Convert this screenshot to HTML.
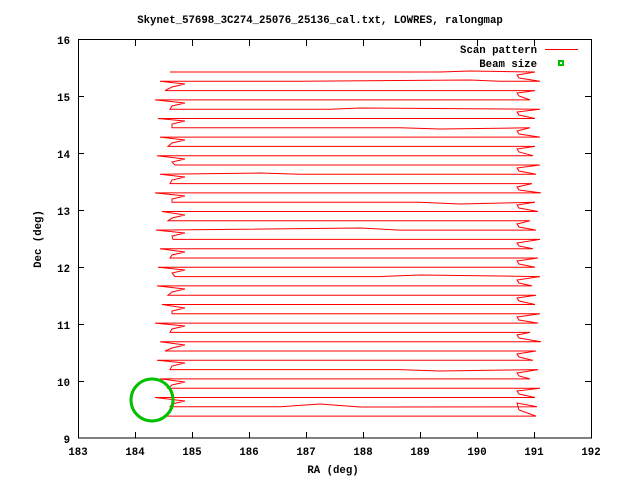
<!DOCTYPE html>
<html><head><style>
html,body{margin:0;padding:0;background:#fff;width:640px;height:480px;overflow:hidden}
svg text{font-family:"Liberation Mono","DejaVu Sans Mono",monospace;font-weight:bold;font-size:10.7px;fill:#000}
</style></head><body>
<svg width="640" height="480" viewBox="0 0 640 480" xmlns="http://www.w3.org/2000/svg">
<rect width="640" height="480" fill="#fff"/>
<text x="320" y="23" text-anchor="middle">Skynet_57698_3C274_25076_25136_cal.txt, LOWRES, ralongmap</text>
<g stroke="#000" stroke-width="1" fill="none">
<rect x="78.5" y="39.5" width="513" height="398.5"/>
<path d="M135.5,438V432M192.5,438V432M249.5,438V432M306.5,438V432M363.5,438V432M420.5,438V432M477.5,438V432M534.5,438V432
M135.5,40V46M192.5,40V46M249.5,40V46M306.5,40V46M363.5,40V46M420.5,40V46M477.5,40V46M534.5,40V46
M78,96.5H84M78,153.5H84M78,210.5H84M78,267.5H84M78,324.5H84M78,381.5H84
M591,96.5H585M591,153.5H585M591,210.5H585M591,267.5H585M591,324.5H585M591,381.5H585"/>
</g>
<g text-anchor="end">
<text x="70" y="44">16</text><text x="70" y="101">15</text><text x="70" y="158">14</text><text x="70" y="215">13</text>
<text x="70" y="272">12</text><text x="70" y="329">11</text><text x="70" y="386">10</text><text x="70" y="443">9</text>
</g>
<g text-anchor="middle">
<text x="78" y="455">183</text><text x="135" y="455">184</text><text x="192" y="455">185</text><text x="249" y="455">186</text>
<text x="306" y="455">187</text><text x="363" y="455">188</text><text x="420" y="455">189</text><text x="477" y="455">190</text>
<text x="534" y="455">191</text><text x="591" y="455">192</text>
<text x="333" y="473">RA (deg)</text>
</g>
<text transform="translate(41,239) rotate(-90)" text-anchor="middle">Dec (deg)</text>
<text x="537" y="53" text-anchor="end">Scan pattern</text>
<text x="537" y="67" text-anchor="end">Beam size</text>
<line x1="545" y1="49.5" x2="578" y2="49.5" stroke="#f00" stroke-width="1"/>
<rect x="558" y="60" width="6" height="6" fill="#00c000"/>
<rect x="560" y="62" width="2" height="2" fill="#fff"/>
<polyline fill="none" stroke="#f00" stroke-width="1" points="
170,72 440,72 470,71 535,72 517,75 519,78
540,81.3 500,81.3 470,80 300,81.3 160,81.3 185,84 172,87
165,90.6 535,90.6 517,93 519,96
530,99.9 155,99.9 185,103 172,106
170,109.2 330,109.2 360,108 540,109.2 517,112 519,115
535,118.5 158,118.5 185,121 172,124
172,127.8 400,127.8 440,129 530,127.8 517,131 519,134
540,137.1 160,137.1 185,140 172,143
168,146.4 535,146.4 517,149 519,152
533,155.7 157,155.7 185,159 172,162
175,165 540,165 517,168 519,171
536,174.3 300,174.3 260,173 160,174.3 185,177 172,180
170,183.6 532,183.6 517,187 519,190
541,192.9 155,192.9 185,196 172,199
172,202.2 420,202.2 460,204 535,202.2 517,205 519,208
538,211.5 162,211.5 185,215 172,218
168,220.8 530,220.8 517,224 519,227
536,230.1 400,230.1 360,228 156,230.1 185,233 172,236
173,239.4 540,239.4 517,243 519,246
533,248.7 160,248.7 185,252 172,255
170,258 538,258 517,261 519,264
535,267.3 158,267.3 185,270 172,273
175,276.6 380,276.6 420,275 540,276.6 517,280 519,283
532,285.9 157,285.9 185,289 172,292
168,295.2 536,295.2 517,298 519,301
535,304.5 162,304.5 185,308 172,311
172,313.8 540,313.8 517,317 519,320
538,323.1 155,323.1 185,326 172,329
170,332.4 530,332.4 517,335 519,338
541,341.7 160,341.7 185,345 172,348
165,351 536,351 517,354 519,357
533,360.3 157,360.3 185,363 172,366
170,369.6 400,369.6 440,371 538,369.6 517,373 519,376
530,378.9 160,378.9 185,382 172,385
168,388.2 540,388.2 517,391 519,394
535,397.5 155,397.5 185,401 172,404
170,406.8 280,406.8 320,404 360,407 537,406.8 517,403 519,410
536,416.1 165,416.1"/>
<circle cx="152" cy="400" r="21" fill="none" stroke="#00c000" stroke-width="3"/>
</svg>
</body></html>
